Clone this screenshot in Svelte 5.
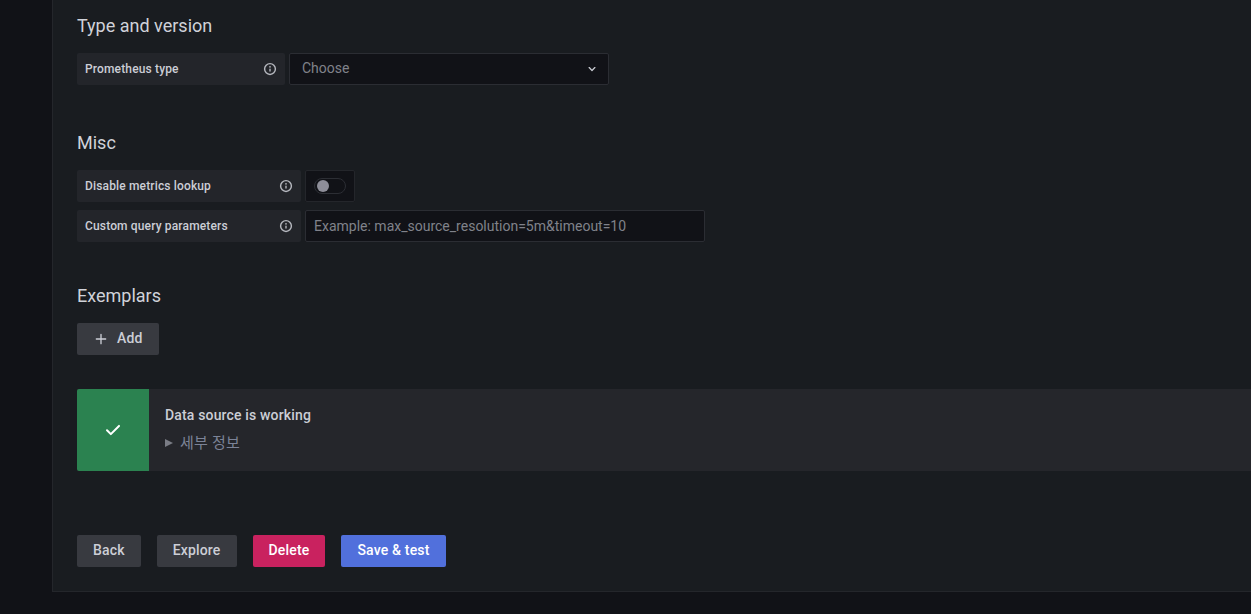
<script>
  const actions = [
    { label: "Back", kind: "secondary" },
    { label: "Explore", kind: "secondary" },
    { label: "Delete", kind: "danger" },
    { label: "Save & test", kind: "primary" },
  ];
</script>

{#snippet info()}
  <svg class="info" viewBox="0 0 24 24" width="14" height="14" fill="currentColor">
    <path d="M12 1.5a10.5 10.5 0 1 0 0 21 10.5 10.5 0 0 0 0-21zm0 18.5a8 8 0 1 1 0-16 8 8 0 0 1 0 16zm0-9a1.2 1.2 0 0 0-1.2 1.2v3.3a1.2 1.2 0 0 0 2.4 0v-3.3A1.2 1.2 0 0 0 12 11zm0-4.2a1.5 1.5 0 1 0 0 3 1.5 1.5 0 0 0 0-3z" />
  </svg>
{/snippet}

<div class="page">
  <main class="panel">
    <section class="type-section">
      <h3>Type and version</h3>
      <div class="row">
        <div class="label type-label"><span>Prometheus type</span>{@render info()}</div>
        <div class="select">
          <span>Choose</span>
          <svg viewBox="0 0 24 24" width="16" height="16" fill="currentColor">
            <path d="M17 9.17a1 1 0 0 0-1.41 0L12 12.71 8.46 9.17a1 1 0 0 0-1.41 1.42l4.24 4.24a1 1 0 0 0 1.42 0L17 10.59a1 1 0 0 0 0-1.42z" />
          </svg>
        </div>
      </div>
    </section>

    <section class="misc-section">
      <h3>Misc</h3>
      <div class="row">
        <div class="label"><span>Disable metrics lookup</span>{@render info()}</div>
        <div class="switch-box"><div class="switch"><div class="knob"></div></div></div>
      </div>
      <div class="row">
        <div class="label"><span>Custom query parameters</span>{@render info()}</div>
        <input class="query" placeholder="Example: max_source_resolution=5m&timeout=10" />
      </div>
    </section>

    <section class="exemplars-section">
      <h3>Exemplars</h3>
      <button class="btn secondary add">
        <svg viewBox="0 0 24 24" width="16" height="16" fill="currentColor">
          <path d="M19 11h-6V5a1 1 0 0 0-2 0v6H5a1 1 0 0 0 0 2h6v6a1 1 0 0 0 2 0v-6h6a1 1 0 0 0 0-2z" />
        </svg>
        <span>Add</span>
      </button>
    </section>

    <div class="alert">
      <div class="alert-icon">
        <svg viewBox="0 0 24 24" width="24" height="24" fill="currentColor">
          <path d="M18.71 7.21a1 1 0 0 0-1.42 0l-7.45 7.46-3.13-3.14a1 1 0 1 0-1.42 1.42l3.84 3.84a1 1 0 0 0 1.42 0l8.16-8.16a1 1 0 0 0 0-1.42z" />
        </svg>
      </div>
      <div class="alert-body">
        <div class="alert-title">Data source is working</div>
        <div class="details"><span class="caret"></span><span lang="ko" class="ko">세부 정보</span></div>
      </div>
    </div>

    <div class="actions">
      {#each actions as action}
        <button class="btn {action.kind}"><span>{action.label}</span></button>
      {/each}
    </div>
  </main>
</div>

<style>
  :global(body) {
    background: #111217;
    font-family: Roboto, "Noto Sans CJK KR", sans-serif;
    overflow: hidden;
  }

  .page {
    height: 614px;
    padding-left: 52px;
    box-sizing: border-box;
    background: #111217;
  }

  .panel {
    height: 592px;
    box-sizing: border-box;
    padding: 14px 0 0 24px;
    background: #191c20;
    border-left: 1px solid #24262b;
    border-bottom: 1px solid #24262b;
  }

  h3 {
    margin: 0;
    font-size: 18px;
    font-weight: 400;
    line-height: 24px;
    color: #d0d2d9;
  }

  .type-section h3 {
    margin-bottom: 15px;
  }

  .misc-section {
    margin-top: 46px;
  }

  .misc-section h3 {
    margin-bottom: 15px;
  }

  .row {
    display: flex;
    gap: 4px;
    margin-bottom: 8px;
  }

  .label {
    width: 224px;
    height: 32px;
    box-sizing: border-box;
    padding: 0 8px;
    display: flex;
    align-items: center;
    justify-content: space-between;
    background: #23252a;
    border-radius: 2px;
    font-size: 12px;
    font-weight: 500;
    letter-spacing: 0.15px;
    color: #ccced6;
  }

  .type-label {
    width: 208px;
  }

  .info {
    color: #b4b6bd;
  }

  .select {
    width: 320px;
    height: 32px;
    box-sizing: border-box;
    padding: 0 8px 2px 12px;
    display: flex;
    align-items: center;
    justify-content: space-between;
    background: #111217;
    border: 1px solid #2b2d33;
    border-radius: 2px;
    font-size: 14px;
    color: #80828a;
  }

  .select svg {
    color: #c7c9d0;
    margin-top: 2px;
  }

  .switch-box {
    width: 50px;
    height: 32px;
    box-sizing: border-box;
    display: flex;
    align-items: center;
    justify-content: center;
    background: #111217;
    border: 1px solid #24262b;
    border-radius: 2px;
  }

  .switch {
    width: 32px;
    height: 16px;
    box-sizing: border-box;
    border: 1px solid #2c2e34;
    border-radius: 8px;
    background: #111217;
    display: flex;
    align-items: center;
    padding-left: 2px;
  }

  .knob {
    width: 12px;
    height: 12px;
    border-radius: 50%;
    background: #8e8e99;
  }

  .query {
    width: 400px;
    height: 32px;
    box-sizing: border-box;
    padding: 0 8px;
    background: #111217;
    border: 1px solid #2b2d33;
    border-radius: 2px;
    font-family: inherit;
    font-size: 14px;
    color: #ccced6;
    outline: none;
  }

  .query::placeholder {
    color: #80828a;
    opacity: 1;
  }

  .exemplars-section {
    margin-top: 42px;
  }

  .exemplars-section h3 {
    margin-bottom: 15px;
  }

  .btn {
    height: 32px;
    padding: 0 16px;
    border: 0;
    border-radius: 2px;
    font-family: inherit;
    font-size: 14px;
    font-weight: 500;
    letter-spacing: 0.17px;
    display: inline-flex;
    align-items: center;
  }

  .btn span {
    margin-top: -2px;
  }

  .secondary {
    background: #383a40;
    color: #ccced6;
  }

  .danger {
    background: #c9225f;
    color: #fff;
  }

  .primary {
    background: #5170dc;
    color: #fff;
  }

  .add {
    gap: 8px;
    letter-spacing: 0.2px;
  }

  .alert {
    margin-top: 34px;
    height: 82px;
    display: flex;
    background: #25262b;
    border-radius: 2px 0 0 2px;
  }

  .alert-icon {
    width: 72px;
    display: flex;
    align-items: center;
    justify-content: center;
    background: #2b8250;
    color: #fff;
    border-radius: 2px 0 0 2px;
  }

  .alert-body {
    padding: 16px;
  }

  .alert-title {
    font-size: 14px;
    font-weight: 500;
    letter-spacing: 0.16px;
    line-height: 20px;
    color: #ccced6;
  }

  .details {
    margin-top: 8px;
    display: flex;
    align-items: center;
    gap: 7px;
    font-size: 14px;
    line-height: 20px;
    color: #7c8397;
  }

  .ko {
    font-size: 15px;
    letter-spacing: 0.2px;
  }

  .caret {
    width: 0;
    height: 0;
    border-left: 8px solid #7a7c85;
    border-top: 4.5px solid transparent;
    border-bottom: 4.5px solid transparent;
  }

  .actions {
    margin-top: 64px;
    display: flex;
    gap: 16px;
  }
</style>
